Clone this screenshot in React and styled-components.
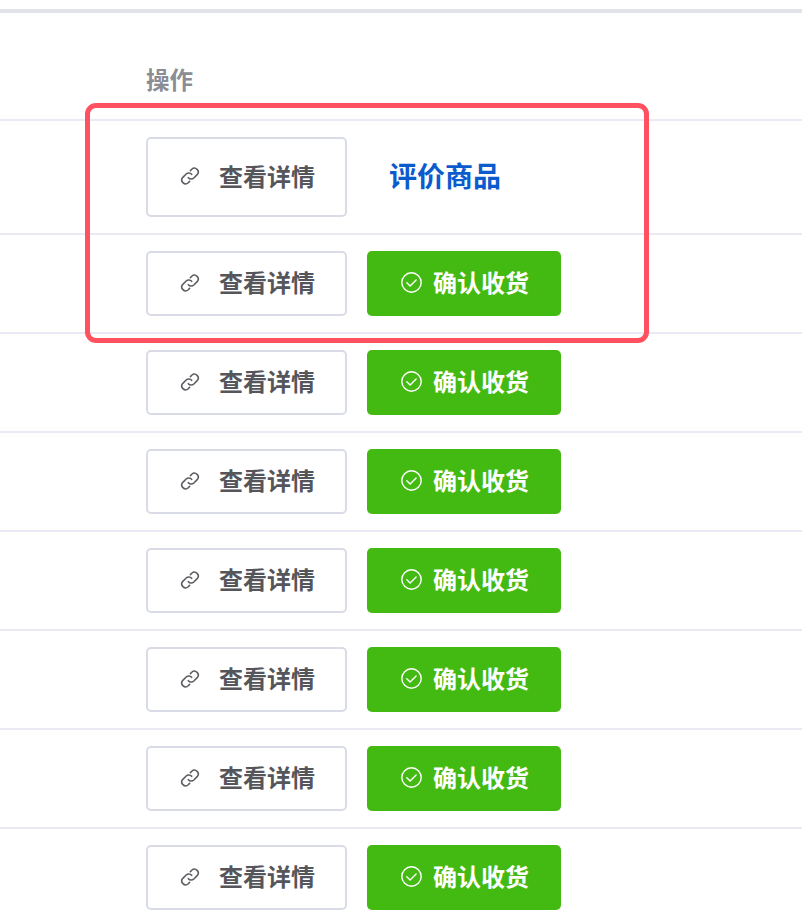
import React from "react";
import styled, { createGlobalStyle } from "styled-components";

const Global = createGlobalStyle`
  html, body { margin: 0; padding: 0; background: #fff; overflow: hidden; height: 912px; }
  body { font-family: "Noto Sans CJK SC", "Noto Sans", sans-serif; }
`;

const Page = styled.div`
  position: relative;
  width: 802px;
  height: 912px;
  overflow: hidden;
  padding-top: 9px;
  box-sizing: border-box;
`;
const TopRule = styled.div`
  height: 4px;
  background: #e1e3eb;
`;
const HeaderRow = styled.div`
  height: 108px;
  box-sizing: border-box;
  padding: 50px 0 0 146px;
  border-bottom: 2px solid #e9eaf3;
  color: #8b8d95;
  font-size: 23.5px;
  font-weight: 700;
  line-height: 32px;
`;
const Row = styled.div`
  height: ${(p) => p.$h}px;
  box-sizing: border-box;
  padding-left: 146px;
  border-bottom: 2px solid #e9eaf3;
  display: flex;
  align-items: center;
  gap: 20px;
`;
const Label = styled.span`
  padding-bottom: 4px;
`;
const IconSvg = styled.svg`
  flex: none;
  margin-bottom: 2px;
`;
const DetailButton = styled.div`
  width: 201px;
  height: ${(p) => p.$h}px;
  box-sizing: border-box;
  border: 2px solid #d9dbe6;
  border-radius: 5px;
  background: #fff;
  color: #55565b;
  font-size: 24px;
  font-weight: 700;
  display: flex;
  align-items: center;
  padding-left: 32px;
  gap: 19px;
`;
const ConfirmButton = styled.div`
  width: 194px;
  height: 65px;
  box-sizing: border-box;
  border-radius: 5px;
  background: #43ba12;
  color: #fff;
  font-size: 24px;
  font-weight: 700;
  display: flex;
  align-items: center;
  padding-left: 34px;
  gap: 11px;
`;
const RateLink = styled.div`
  color: #0c5bcd;
  font-size: 28px;
  font-weight: 700;
  margin-left: 22px;
  padding-bottom: 4px;
`;
const Highlight = styled.div`
  position: absolute;
  left: 85px;
  top: 103px;
  width: 564px;
  height: 240px;
  box-sizing: border-box;
  border: 5px solid #ff5160;
  border-radius: 11px;
  pointer-events: none;
`;

const LinkIcon = () => (
  <IconSvg width="20" height="20" viewBox="0 0 24 24" fill="none" stroke="#5c5d62" strokeWidth="1.9" strokeLinecap="round" strokeLinejoin="round">
    <path d="M10 14a4.6 4.6 0 0 0 6.6.4l4-4a4.6 4.6 0 0 0-6.5-6.5l-1.6 1.6" />
    <path d="M14 10a4.6 4.6 0 0 0-6.6-.4l-4 4a4.6 4.6 0 0 0 6.5 6.5l1.6-1.6" />
  </IconSvg>
);
const CheckIcon = () => (
  <IconSvg width="21" height="21" viewBox="0 0 21 21" fill="none" stroke="#fff" strokeWidth="1.4" strokeLinecap="round" strokeLinejoin="round">
    <circle cx="10.5" cy="10.5" r="9.7" />
    <path d="M5.8 10.8l3.3 3.2 6-6" />
  </IconSvg>
);

export default function App() {
  const rows = [99, 99, 99, 99, 99, 99, 99];
  return (
    <Page>
      <Global />
      <TopRule />
      <HeaderRow>操作</HeaderRow>
      <Row $h={114}>
        <DetailButton $h={80}><LinkIcon /><Label>查看详情</Label></DetailButton>
        <RateLink>评价商品</RateLink>
      </Row>
      {rows.map((h, i) => (
        <Row key={i} $h={h}>
          <DetailButton $h={65}><LinkIcon /><Label>查看详情</Label></DetailButton>
          <ConfirmButton><CheckIcon /><Label>确认收货</Label></ConfirmButton>
        </Row>
      ))}
      <Highlight />
    </Page>
  );
}
